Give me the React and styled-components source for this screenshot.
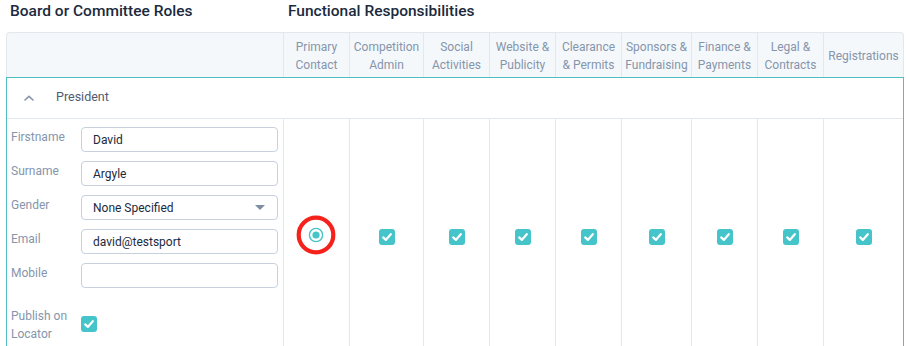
import React from 'react'
import styled, { createGlobalStyle } from 'styled-components'

const GlobalStyle = createGlobalStyle`
    body {
        margin: 0;
        background: #ffffff;
        font-family: Roboto, "Liberation Sans", sans-serif;
    }
`;

const Page = styled.div`
    padding: 0 0 0 6px;
    width: 900px;
`;

const Titles = styled.div`
    display: flex;
    height: 32px;
    align-items: flex-start;
`;

const Title = styled.h2`
    margin: 0;
    padding-top: 2px;
    font-size: 15.5px;
    font-weight: 500;
    color: #1b2a3d;
    width: ${p => p.width}px;
    padding-left: 4px;
`;

const COLS = '276px 66px 74px 66px 66px 66px 70px 66px 66px 80px';

const Header = styled.div`
    display: grid;
    grid-template-columns: ${COLS};
    width: 896px;
    background: #f5f8fb;
    border: 1px solid #e3e8ee;
    border-bottom: none;
    border-radius: 4px 4px 0 0;
    height: 44px;
`;

const HeadCell = styled.div`
    display: flex;
    align-items: center;
    justify-content: center;
    text-align: center;
    border-left: ${p => p.first ? 'none' : '1px solid #e3e8ee'};
    font-size: 12px;
    line-height: 18px;
    color: #8595ab;
    padding-top: 2px;
`;

const Body = styled.div`
    width: 896px;
    border: 1px solid #4fbfc4;
    border-bottom: none;
`;

const RoleRow = styled.div`
    display: flex;
    align-items: center;
    height: 41px;
    padding-bottom: 4px;
    box-sizing: border-box;
    border-bottom: 1px solid #e3e8ee;
`;

const Chevron = styled.svg`
    margin-left: 17px;
    margin-right: 22px;
    margin-top: 3px;
`;

const RoleName = styled.span`
    font-size: 12.5px;
    font-weight: 400;
    color: #4f5b70;
`;

const Row = styled.div`
    display: grid;
    grid-template-columns: ${COLS};
`;

const FormCell = styled.div`
    display: grid;
    grid-template-columns: 70px 197px;
    row-gap: 9px;
    padding: 8px 0 12px 4px;
`;

const Label = styled.div`
    font-size: 12px;
    line-height: 18px;
    color: #8595ab;
    padding-top: ${p => p.tall ? '10px' : '1px'};
`;

const Input = styled.div`
    box-sizing: border-box;
    height: 25px;
    border: 1px solid #c6d1dd;
    border-radius: 4px;
    padding: 0 11px;
    display: flex;
    align-items: center;
    justify-content: space-between;
    font-size: 12px;
    color: #1b2a3d;
`;

const Caret = styled.span`
    width: 0;
    height: 0;
    border-left: 5px solid transparent;
    border-right: 5px solid transparent;
    border-top: 5px solid #7d8da3;
    margin-right: 1px;
`;

const CheckCell = styled.div`
    display: flex;
    align-items: center;
    justify-content: center;
    border-left: 1px solid #e3e8ee;
`;

const CheckWrap = styled.div`
    padding-top: ${p => p.top || 0}px;
    padding-right: ${p => p.right || 0}px;
`;

const Box = styled.span`
    display: inline-flex;
    align-items: center;
    justify-content: center;
    width: 16px;
    height: 16px;
    border-radius: 3px;
    background: #45c4c9;
`;

const Checkbox = () => (
    <Box>
        <svg width="12" height="12" viewBox="0 0 12 12">
            <path d="M2.2 6.4 L4.8 8.9 L9.8 3.2" fill="none" stroke="#fff" strokeWidth="2.2" strokeLinecap="round" strokeLinejoin="round" />
        </svg>
    </Box>
);

const Radio = () => (
    <svg width="42" height="42" viewBox="0 0 42 42">
        <circle cx="21" cy="21" r="17.3" fill="none" stroke="#f5221c" strokeWidth="4.2" />
        <circle cx="21" cy="21" r="6.6" fill="#fff" stroke="#45c4c9" strokeWidth="1.4" />
        <circle cx="21" cy="21" r="3.6" fill="#45c4c9" />
    </svg>
);

const columns = [
    ['Primary', 'Contact'],
    ['Competition', 'Admin'],
    ['Social', 'Activities'],
    ['Website &', 'Publicity'],
    ['Clearance', '& Permits'],
    ['Sponsors &', 'Fundraising'],
    ['Finance &', 'Payments'],
    ['Legal &', 'Contracts'],
    ['Registrations'],
];

const fields = [
    { label: 'Firstname', value: 'David' },
    { label: 'Surname', value: 'Argyle' },
    { label: 'Gender', value: 'None Specified', select: true },
    { label: 'Email', value: 'david@testsport' },
    { label: 'Mobile', value: '' },
];

export default () => (
    <Page>
        <GlobalStyle />
        <Titles>
            <Title width={274}>Board or Committee Roles</Title>
            <Title width={300}>Functional Responsibilities</Title>
        </Titles>
        <Header>
            <HeadCell first />
            {columns.map(c => (
                <HeadCell key={c[0]}>
                    <div>{c.map(l => <div key={l}>{l}</div>)}</div>
                </HeadCell>
            ))}
        </Header>
        <Body>
            <RoleRow>
                <Chevron width="10" height="6" viewBox="0 0 10 6">
                    <path d="M1 5 L5 1.3 L9 5" fill="none" stroke="#8595ab" strokeWidth="1.6" strokeLinecap="round" />
                </Chevron>
                <RoleName>President</RoleName>
            </RoleRow>
            <Row>
                <FormCell>
                    {fields.map(f => (
                        <React.Fragment key={f.label}>
                            <Label>{f.label}</Label>
                            <Input>
                                {f.value}
                                {f.select && <Caret />}
                            </Input>
                        </React.Fragment>
                    ))}
                    <Label tall>Publish on<br />Locator</Label>
                    <CheckWrap top={18}><Checkbox /></CheckWrap>
                </FormCell>
                <CheckCell><CheckWrap right={2}><Radio /></CheckWrap></CheckCell>
                {columns.slice(1).map(c => (
                    <CheckCell key={c[0]}><Checkbox /></CheckCell>
                ))}
            </Row>
        </Body>
    </Page>
)
